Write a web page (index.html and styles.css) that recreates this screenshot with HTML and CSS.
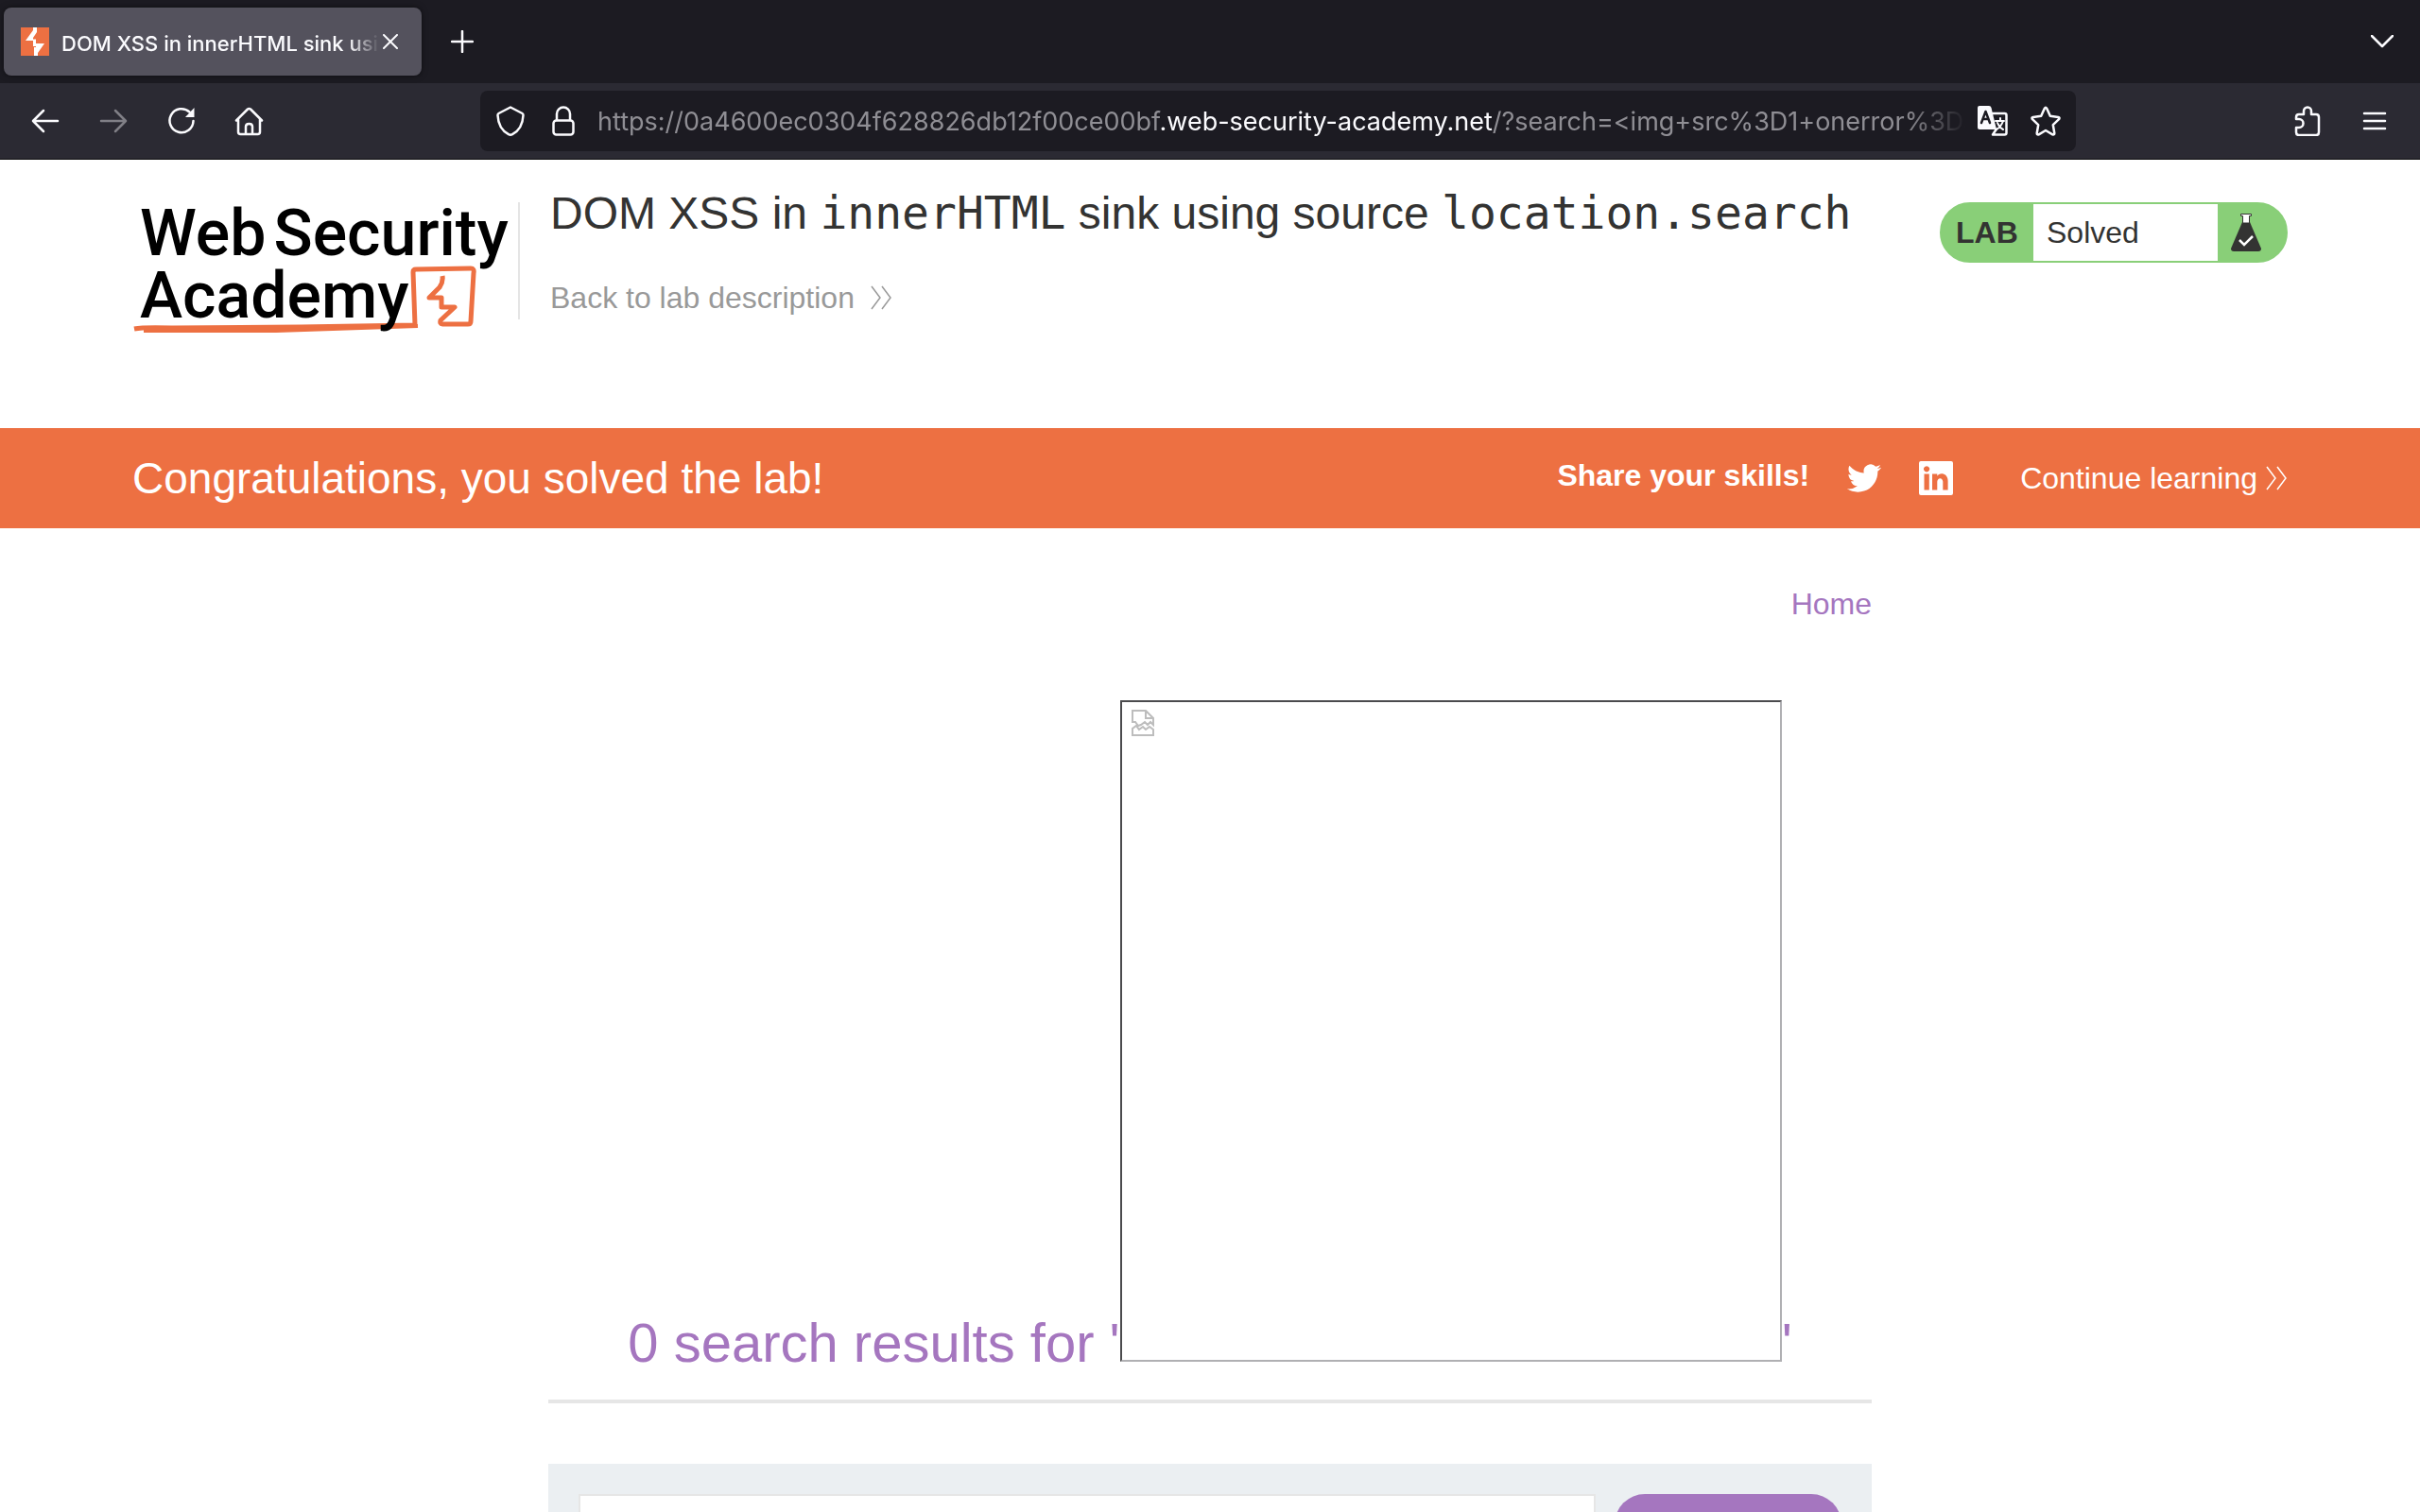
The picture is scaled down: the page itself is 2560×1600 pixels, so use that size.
FILE: index.html
```html
<!DOCTYPE html>
<html lang="en">
<head>
<meta charset="utf-8">
<meta name="viewport" content="width=device-width, initial-scale=1">
<title>DOM XSS in innerHTML sink using source location.search</title>
<link rel="stylesheet" href="styles.css">
</head>
<body>
<div class="window">
  <div class="tabs">
    <div class="tab">
      <svg class="favicon" viewBox="0 0 30 30" aria-hidden="true"><path fill="#ed7042" d="M0 0h30v30H0z"/><path fill="#fff" d="M13 0h4v5l-4 6v1.500h3V17h9L18 27v3h-4v-9h2v-1h-3v-6H5L13 3z"/></svg>
      <span class="tab-title">DOM XSS in innerHTML sink using</span>
      <button class="close" aria-label="Close tab"><svg viewBox="0 0 16 16" width="16" height="16"><path d="M1 1l14 14M15 1L1 15"/></svg></button>
    </div>
    <button class="new-tab" aria-label="New tab"><svg viewBox="0 0 24 24" width="24" height="24"><path d="M12 1v22M1 12h22"/></svg></button>
    <button class="all-tabs" aria-label="List all tabs"><svg viewBox="0 0 24 14" width="24" height="14"><path d="M1 1l11 11L23 1"/></svg></button>
  </div>
  <div class="toolbar">
    <div class="nav">
      <button aria-label="Back"><svg viewBox="0 0 32 32"><path d="M29 16H3M14 5L3 16l11 11"/></svg></button>
      <button class="disabled" aria-label="Forward" disabled><svg viewBox="0 0 32 32"><path d="M3 16h26M18 5l11 11-11 11"/></svg></button>
      <button aria-label="Reload"><svg viewBox="0 0 32 32"><path d="M28.500 16A12.500 12.500 0 1 1 24.500 6.500"/><path class="solid" d="M29.500 2v10H20z"/></svg></button>
      <button aria-label="Home"><svg viewBox="0 0 32 32"><path d="M2 15.500L14 3.500q1.500-1 3 0L29 15.500M4 14v13.500q0 2.500 2.500 2.500h18q2.500 0 2.500-2.500V14M12 30v-8q0-3 3.500-3t3.500 3v8"/></svg></button>
    </div>
    <div class="address">
      <svg class="ic" viewBox="0 0 32 32" aria-hidden="true"><path d="M16 1.500L28.500 8q1 .5 1 2C29 20 24 27 18 30.200q-2 1-4 0C8 27 3 20 2.500 10q0-1.500 1-2z"/></svg>
      <svg class="ic" viewBox="0 0 32 32" aria-hidden="true"><rect x="5.500" y="15.500" width="21" height="15" rx="3"/><path d="M9 15V8.500a7 7 0 0 1 14 0V15"/></svg>
      <div class="url">https://0a4600ec0304f628826db12f00ce00bf<b>.web-security-academy.net</b>/?search=&lt;img+src%3D1+onerror%3Dal</div>
      <button aria-label="Translate page"><svg viewBox="0 0 32 32"><path d="M16 8h12.500q2 0 2 2v18.500q0 2-2 2H16l4-6"/><path class="solid" d="M2 0h10q2 0 2.500 2L20 25H2q-2 0-2-2V2q0-2 2-2z"/><path class="dark" d="M4 18L8.500 6 13 18M6 14h5"/><path class="thin" d="M19 16h9M24 13v3M27 16q-2 6-7 9M21 18q2 5 6 7"/></svg></button>
      <button aria-label="Bookmark this page"><svg viewBox="0 0 32 32"><path d="M14.800 2.800q1.200-2 2.400 0l3.600 8 8.500 1.200q2 .4.700 2.200l-6.200 6 1.500 8.800q0 2-2 1.300L16 26l-7.300 4.300q-2 .7-2-1.300l1.500-8.800-6.200-6Q.7 12.400 2.700 12l8.500-1.200z"/></svg></button>
    </div>
    <div class="tools">
      <button aria-label="Extensions"><svg viewBox="0 0 32 32"><path d="M13 9V5.500a4 4 0 0 1 8 0V9h5q3 0 3 3v16q0 3-3 3H8q-3 0-3-3v-5h3a4.500 4.500 0 0 0 0-9H5v-2q0-3 3-3z"/></svg></button>
      <button aria-label="Open application menu"><svg viewBox="0 0 32 32"><path d="M5 8h22M5 16h22M5 24h22"/></svg></button>
    </div>
  </div>

  <div class="page">
    <header class="lab-header container">
      <a class="logo" href="#" aria-label="Web Security Academy">
        <svg class="logo-mark" viewBox="0 0 410 150" aria-hidden="true"><path d="M4 136Q14 134 44 135L180 134l121-2-2-56q0-3 3-3l58-1q4 0 3 5l-3 51q0 3-3 3h-27q-3 0-2-4l15-14h-14v-10h-13l11-11q4-6 3-12"/><path class="thick" d="M14 138l140 0 150-5"/></svg>
        <span class="logo-line"><span>Web</span><span>Security</span></span>
        <span class="logo-line">Academy</span>
      </a>
      <div class="divider"></div>
      <div class="lab-title">
        <h2>DOM XSS in <code>innerHTML</code> sink using source <code>location.search</code></h2>
        <a href="#">Back to lab description <svg class="chev" viewBox="0 0 24 26" aria-hidden="true"><path d="M2 1l9 12-9 12M13 1l9 12-9 12"/></svg></a>
      </div>
      <div class="status">
        <strong>LAB</strong>
        <span class="state">Solved</span>
        <span class="flask"><svg viewBox="0 0 32 40" width="32" height="40" aria-hidden="true"><path fill="#333332" d="M12 9h8l12 28q0 3-3 3H3q-3 0-3-3z"/><path fill="#fff" stroke="#333332" d="M10.500.5h11v2h-2V10h-7V2.500h-2z"/><path fill="none" stroke="#fff" stroke-width="2.500" d="M9 28l5 5 9-9"/></svg></span>
      </div>
    </header>

    <section class="banner">
      <div class="container banner-row">
        <h4>Congratulations, you solved the lab!</h4>
        <div class="share">
          <strong>Share your skills!</strong>
          <a href="#" aria-label="Share on Twitter"><svg viewBox="0 0 24 24" width="36" height="36"><path d="M24 4.557a9.830 9.830 0 0 1-2.828.775 4.932 4.932 0 0 0 2.165-2.724 9.864 9.864 0 0 1-3.127 1.195 4.916 4.916 0 0 0-8.384 4.482C7.691 8.094 4.066 6.130 1.640 3.161a4.822 4.822 0 0 0-.666 2.475c0 1.710.87 3.213 2.188 4.096a4.904 4.904 0 0 1-2.228-.616v.061a4.923 4.923 0 0 0 3.946 4.827 4.996 4.996 0 0 1-2.212.085 4.936 4.936 0 0 0 4.604 3.417 9.867 9.867 0 0 1-6.102 2.105c-.39 0-.779-.023-1.170-.067a13.995 13.995 0 0 0 7.557 2.209c9.054 0 13.999-7.496 13.999-13.986 0-.209 0-.42-.015-.63A9.935 9.935 0 0 0 24 4.590z"/></svg></a>
          <a href="#" aria-label="Share on LinkedIn"><svg viewBox="0 0 36 36" width="36" height="36"><path fill-rule="evenodd" d="M2 0h32q2 0 2 2v32q0 2-2 2H2q-2 0-2-2V2q0-2 2-2zM5.500 13.500V30.500h5.300v-17zM8.100 5.200a3.100 3.100 0 1 0 .01 0zM14 13.500v17h5.300v-8.500c0-5 6-5.200 6 0v8.500h5.300V21c0-8.500-9-9.500-11.300-5.200v-2.300z"/></svg></a>
        </div>
        <a class="continue" href="#">Continue learning <svg class="chev" viewBox="0 0 24 26" aria-hidden="true"><path d="M2 1l9 12-9 12M13 1l9 12-9 12"/></svg></a>
      </div>
    </section>

    <main class="content">
      <nav class="top-links"><a href="#">Home</a></nav>
      <h1 class="results">0 search results for '<span class="broken" role="img" aria-label="Broken image"><svg viewBox="0 0 24 28" width="24" height="28" aria-hidden="true"><path d="M1 13V1h14l8 8v7l-3-3-3 3-3-3-4 3-3 1-3-4zM15 1v8h8M1 27v-7l4-3 3 4 4-3 3 3 4-3 4 3v6z"/></svg></span>'</h1>
      <form class="search">
        <input type="text" aria-label="Search the blog">
        <button type="button" aria-label="Search"></button>
      </form>
    </main>
  </div>
</div>
</body>
</html>
```
FILE: styles.css
```css
* { box-sizing: border-box; }

body {
  margin: 0;
  background: #fff;
  color: #333332;
  font: 32px/36px "Liberation Sans", Arial, sans-serif;
}

a { color: inherit; text-decoration: none; }
h1, h2, h4 { margin: 0; font-weight: 400; }
svg { display: block; }

.window {
  display: flex;
  flex-direction: column;
  height: 100vh;
  overflow: hidden;
}

/* Browser chrome */
.tabs, .toolbar {
  flex: none;
  display: flex;
  align-items: center;
  color: #fbfbfe;
}
.tabs { height: 88px; padding: 0 28px 0 4px; background: #1c1b22; }
.toolbar {
  height: 81px;
  padding: 0 32px;
  background: #2b2a33;
  border-bottom: 1px solid #0c0c0d;
}
.tabs button, .toolbar button {
  flex: none;
  padding: 0;
  border: 0;
  background: none;
  color: inherit;
}
.tabs button svg, .toolbar svg {
  fill: none;
  stroke: currentColor;
  stroke-width: 2.500;
  stroke-linecap: round;
  stroke-linejoin: round;
}
.toolbar svg { width: 32px; height: 32px; }
.toolbar svg .solid { fill: currentColor; stroke: none; }
.toolbar svg .dark { stroke: #1c1b22; stroke-width: 2.500; }
.toolbar svg .thin { stroke-width: 2; }
.tab {
  flex: none;
  display: flex;
  align-items: center;
  width: 442px;
  height: 72px;
  padding: 0 25px 0 18px;
  border-radius: 8px;
  background: #54525d;
  box-shadow: 0 0 6px rgba(0, 0, 0, .5);
}
.favicon { flex: none; width: 30px; height: 30px; }
.tab-title {
  flex: 1;
  min-width: 0;
  margin: 0 4px 0 13px;
  padding-top: 4px;
  overflow: hidden;
  white-space: nowrap;
  font: 500 22px/32px Inter, sans-serif;
  -webkit-mask-image: linear-gradient(to left, transparent, #000 32px);
  mask-image: linear-gradient(to left, transparent, #000 32px);
}
.tab .close svg { stroke-width: 2; }
.new-tab { margin-left: 31px; }
.tabs .all-tabs { margin-left: auto; }

.nav { display: flex; gap: 40px; }
.nav .disabled { color: #807f86; }
.tools { display: flex; gap: 40px; }
.nav, .tools { flex: none; }
.address {
  flex: 1;
  min-width: 0;
  display: flex;
  align-items: center;
  height: 64px;
  margin: 0 228px;
  padding: 0 16px;
  border-radius: 8px;
  background: #1c1b22;
}
.address .ic { flex: none; }
.address .ic + .ic { margin-left: 24px; }
.address button + button { margin-left: 24px; }
.url {
  flex: 1;
  min-width: 0;
  margin: 0 12px 0 20px;
  padding-top: 2px;
  overflow: hidden;
  white-space: nowrap;
  color: #8f8e94;
  font: 27px/40px Inter, sans-serif;
  -webkit-mask-image: linear-gradient(to left, transparent, #000 64px);
  mask-image: linear-gradient(to left, transparent, #000 64px);
}
.url b { color: #fbfbfe; font-weight: 400; }

/* Lab header */
.page { flex: 1; min-height: 0; overflow: hidden; }
.container { max-width: 2280px; margin: 0 auto; }
.lab-header {
  display: flex;
  align-items: flex-start;
  height: 284px;
  padding-top: 29px;
}
.logo {
  flex: none;
  position: relative;
  width: 408px;
  height: 156px;
  padding: 16px 0 0 8px;
  color: #000;
  font: 500 68px/66px Roboto, sans-serif;
}
.logo-line { position: relative; display: flex; gap: 8px; }
.logo-mark {
  position: absolute;
  top: 14px;
  left: -2px;
  width: 410px;
  height: 150px;
  fill: none;
  stroke: #ed7042;
  stroke-width: 5;
  stroke-linejoin: round;
}
.logo-mark .thick { stroke-width: 4; }
.divider {
  flex: none;
  width: 2px;
  height: 124px;
  margin: 16px 32px 0 0;
  background: #e5e5e5;
}
.lab-title { flex: 1; }
.lab-title h2 {
  font-size: 48px;
  line-height: 54px;
}
.lab-title code { font-family: "DejaVu Sans Mono", monospace; }
.lab-title a { color: #999; }
.lab-title a, .continue { display: flex; align-items: center; }
.lab-title a { margin-top: 44px; gap: 16px; }
.continue { gap: 8px; }
.chev {
  width: 24px;
  height: 26px;
  fill: none;
  stroke: currentColor;
  stroke-width: 1.500;
}
.status {
  flex: none;
  display: flex;
  width: 368px;
  height: 64px;
  margin-top: 16px;
  border: 2px solid #89cf78;
  border-radius: 32px;
  background: #89cf78;
  line-height: 60px;
}
.status strong { width: 97px; padding-left: 15px; }
.status .state { flex: 1; padding-left: 14px; background: #fff; }
.status .flask { width: 72px; padding: 10px 0 0 14px; }

/* Banner */
.banner { background: #ed7042; color: #fff; }
.banner-row { display: flex; align-items: center; height: 106px; }
.banner h4 { font-size: 46px; line-height: 56px; }
.share { display: flex; align-items: center; gap: 40px; margin-left: auto; }
.share strong { padding-bottom: 6px; }
.share svg { fill: #fff; }
.continue { margin-left: 71px; }

/* Results */
.content { width: 1400px; max-width: 100%; margin: 0 auto; }
.top-links { padding: 62px 0 84px; text-align: right; }
.top-links a, .results { color: #a576bf; }
.results {
  padding-bottom: 27px;
  border-bottom: 4px solid #e6e6e6;
  text-align: center;
  font-size: 58px;
  line-height: 66px;
}
.broken {
  display: inline-block;
  width: 700px;
  height: 700px;
  padding: 8px 10px;
  border: 2px solid;
  border-color: #4b4b4d #b0b0b3 #b0b0b3 #4b4b4d;
  vertical-align: baseline;
}
.broken svg { fill: none; stroke: #bdbdbd; stroke-width: 2; }
.search {
  display: flex;
  gap: 20px;
  margin-top: 64px;
  padding: 32px;
  background: #ebeff2;
}
.search input {
  flex: 1;
  height: 72px;
  border: 2px solid #e6e6e6;
  background: #fff;
  font: inherit;
}
.search button {
  width: 240px;
  height: 72px;
  border: 0;
  border-radius: 32px;
  background: #a576bf;
}
```
